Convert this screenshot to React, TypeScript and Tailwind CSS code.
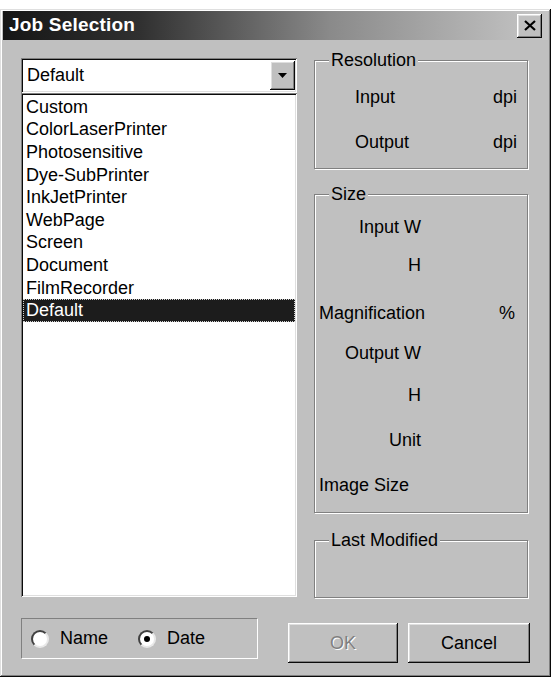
import React from 'react';
import clsx from 'clsx';

const jobs = [
  'Custom',
  'ColorLaserPrinter',
  'Photosensitive',
  'Dye-SubPrinter',
  'InkJetPrinter',
  'WebPage',
  'Screen',
  'Document',
  'FilmRecorder',
  'Default',
];

const raised =
  'shadow-[inset_-1px_-1px_0_#0a0a0a,inset_1px_1px_0_#ffffff,inset_-2px_-2px_0_#808080,inset_2px_2px_0_#dfdfdf]';
const sunken =
  'shadow-[inset_1px_1px_0_#808080,inset_-1px_-1px_0_#ffffff,inset_2px_2px_0_#0a0a0a,inset_-2px_-2px_0_#dfdfdf]';

interface GroupProps {
  label: string;
  className?: string;
  children?: React.ReactNode;
}

const Group: React.FC<GroupProps> = ({ label, className, children }) => (
  <div
    className={clsx(
      'relative w-[214px] border border-[#808080] shadow-[inset_1px_1px_0_#ffffff,1px_1px_0_#ffffff]',
      className
    )}
  >
    <span className="absolute -top-[11px] left-[14px] bg-[#c0c0c0] px-[2px] leading-[20px]">
      {label}
    </span>
    {children}
  </div>
);

const Radio: React.FC<{ label: string; checked?: boolean }> = ({ label, checked }) => (
  <div className="flex items-center gap-[11px]">
    <div className="flex h-[18px] w-[18px] items-center justify-center rounded-full border-2 border-t-[#404040] border-l-[#404040] border-r-[#e8e8e8] border-b-[#e8e8e8] bg-white">
      {checked && <div className="h-[6px] w-[6px] rounded-full bg-black" />}
    </div>
    <span>{label}</span>
  </div>
);

// size box rows: label, alignment, top margin
const sizeRows = [
  { label: 'Input W', right: true, mt: 'mt-[22px]' },
  { label: 'H', right: true, mt: 'mt-[18px]' },
  { label: 'Magnification', right: false, mt: 'mt-[28px]', unit: '%' },
  { label: 'Output W', right: true, mt: 'mt-[20px]' },
  { label: 'H', right: true, mt: 'mt-[22px]' },
  { label: 'Unit', right: true, mt: 'mt-[25px]' },
  { label: 'Image Size', right: false, mt: 'mt-[25px]' },
];

export default function App() {
  return (
    <div className="h-[682px] w-[554px] bg-white pt-[9px] font-['Liberation_Sans',Arial,sans-serif] text-[18px] text-black">
      <div className="flex h-[668px] w-[551px] flex-col bg-[#c0c0c0] px-[3px] pt-[2px] shadow-[inset_-1px_-1px_0_#0a0a0a,inset_1px_1px_0_#dfdfdf,inset_-2px_-2px_0_#808080,inset_2px_2px_0_#ffffff]">
        {/* title bar */}
        <div className="flex h-[29px] items-center justify-between bg-[linear-gradient(to_right,#161616,#303030_25%,#8a8a8a_60%,#c6c6c6)] pl-[6px] pr-[6px]">
          <span className="text-[19px] font-bold tracking-[0.2px] text-white">Job Selection</span>
          <button
            className={clsx(
              'flex h-[24px] w-[25px] items-center justify-center bg-[#c0c0c0]',
              raised
            )}
          >
            <svg width="12" height="11" viewBox="0 0 12 11">
              <path d="M1 1 L11 10 M11 1 L1 10" stroke="#000" strokeWidth="2.2" />
            </svg>
          </button>
        </div>

        {/* main */}
        <div className="flex pl-[18px] pt-[18px]">
          <div className="flex w-[276px] flex-col">
            <div className={clsx('flex h-[35px] items-center justify-between bg-white p-[2px] pl-[6px]', sunken)}>
              <span>Default</span>
              <div className={clsx('flex h-[29px] w-[25px] items-center justify-center bg-[#c0c0c0]', raised)}>
                <svg width="9" height="5" viewBox="0 0 9 5">
                  <path d="M0 0 H9 L4.5 5 Z" fill="#000" />
                </svg>
              </div>
            </div>
            <div className={clsx('h-[504px] bg-white px-[2px] py-[3px]', sunken)}>
              {jobs.map((job, i) => (
                <div
                  key={job}
                  className={clsx(
                    'flex h-[22.6px] items-center pl-[3px]',
                    i === jobs.length - 1 &&
                      'bg-[#1c1c1c] text-white outline outline-1 outline-dotted outline-[#d0d0d0] -outline-offset-1'
                  )}
                >
                  {job}
                </div>
              ))}
            </div>
          </div>

          <div className="ml-[17px] mt-[2px] flex flex-col">
            <Group label="Resolution" className="h-[109px] pt-[14px]">
              <div className="flex h-[45px] items-center justify-between pl-[40px] pr-[10px]">
                <span>Input</span>
                <span>dpi</span>
              </div>
              <div className="flex h-[45px] items-center justify-between pl-[40px] pr-[10px]">
                <span>Output</span>
                <span>dpi</span>
              </div>
            </Group>

            <Group label="Size" className="mt-[25px] h-[319px]">
              {sizeRows.map((row, i) => (
                <div key={i} className={clsx('flex h-[20px] items-center', row.mt)}>
                  {row.right ? (
                    <span className="w-[106px] text-right">{row.label}</span>
                  ) : (
                    <span className="pl-[4px]">{row.label}</span>
                  )}
                  {row.unit && <span className="ml-auto pr-[12px]">{row.unit}</span>}
                </div>
              ))}
            </Group>

            <Group label="Last Modified" className="mt-[27px] h-[58px]" />
          </div>
        </div>

        {/* bottom row */}
        <div className="flex items-start pl-[18px] pt-[20px]">
          <div className="flex h-[41px] w-[237px] items-center gap-[30px] border border-t-[#808080] border-l-[#808080] border-r-[#ffffff] border-b-[#ffffff] pl-[9px]">
            <Radio label="Name" />
            <Radio label="Date" checked />
          </div>
          <button
            disabled
            className={clsx(
              'ml-[30px] mt-[5px] h-[40px] w-[110px] bg-[#c0c0c0] text-[#808080] [text-shadow:1px_1px_0_#ffffff]',
              raised
            )}
          >
            OK
          </button>
          <button
            className={clsx('ml-[10px] mt-[5px] h-[40px] w-[122px] bg-[#c0c0c0]', raised)}
          >
            Cancel
          </button>
        </div>
      </div>
    </div>
  );
}
